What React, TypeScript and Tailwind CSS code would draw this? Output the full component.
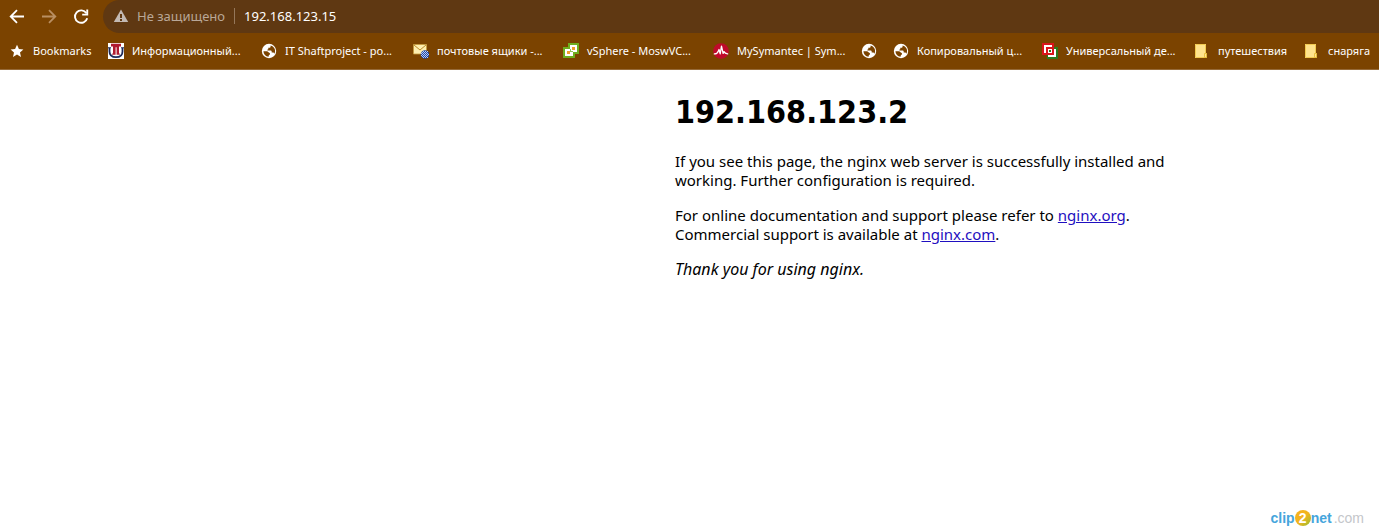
import type { ReactNode } from 'react';

function Svg({ children }: { children: ReactNode }) {
  return (
    <svg width="16" height="16" viewBox="0 0 16 16" className="shrink-0" aria-hidden="true">
      {children}
    </svg>
  );
}

const StarIcon = () => (
  <Svg>
    <path fill="#fff" d="M8 1.800l1.900 4.100 4.500.5-3.400 3 1 4.500L8 11.600l-4 2.300 1-4.500-3.400-3 4.500-.5z" />
  </Svg>
);

const UniversityIcon = () => (
  <Svg>
    <path fill="#fff" d="M0 0h16v16H0z" />
    <path fill="none" stroke="#1d2a5c" strokeWidth="1.800" d="M1.500 5v3.500C1.500 12 4 14.200 8 14.200s6.500-2.200 6.500-5.700V5" />
    <path fill="#1d2a5c" d="M0 4.200h3v1H0zM13 4.200h3v1h-3z" />
    <path fill="#b01a30" d="M3 .8h10v2.800h-2v7h.8v1.200H8.600V4.200H7.600v7.600H4.200v-1.200H5v-7H3z" />
  </Svg>
);

const GlobeIcon = () => (
  <Svg>
    <circle cx="8" cy="8" r="7.200" fill="#fff" />
    <path
      fill="#7b4300"
      d="M2.400 8.200h3.200c.9 0 1.500.4 1.900 1.100.3.500.8.600 1.400.6v1.700c-.7.100-1.100.5-1.200 1.200l-.1.900C4.600 13.400 2.500 11.200 2.400 8.200zM9.600 2.500v.9c0 .8-.6 1.300-1.400 1.300h-.9v1.200c0 .5-.4.700-.9.700v.9h3c.8 0 1.300.5 1.300 1.200v.8h1c.9 0 1.500.5 1.700 1.300.9-1.400.9-3.700.1-5.200-.8-1.600-2.200-2.700-3.900-3.100z"
    />
  </Svg>
);

const MailIcon = () => (
  <Svg>
    <path fill="#fdeeb0" stroke="#c59a3c" strokeWidth=".8" d="M.5 1.500h13v9.500H.5z" />
    <path fill="none" stroke="#b98b2c" d="M1 2l6 5 6-5" />
    <circle cx="12" cy="11.500" r="4.300" fill="#2147a4" />
    <path
      stroke="#b9cdf5"
      strokeWidth="1"
      strokeDasharray="1 1"
      d="M10 8.500h5M9 9.500h6M8 10.500h8M9 11.500h7M8 12.500h8M9 13.500h6M10 14.500h5"
    />
  </Svg>
);

const VSphereIcon = () => (
  <Svg>
    <path fill="#6fae1f" d="M5 0h11v11h-4v4H0V4h5z" />
    <path fill="#fff" d="M7 2h7v7h-4v4H2V6h5z" />
    <path fill="#8fc256" d="M7 6h1v2h2v1H7z" />
    <path fill="#f0a02b" d="M9 4h3v3H9zM4 8h3v3H4z" />
  </Svg>
);

const PulseIcon = () => (
  <Svg>
    <circle cx="8" cy="8" r="7.800" fill="#c00a2b" />
    <path
      fill="none"
      stroke="#fff"
      strokeWidth="1.300"
      strokeLinejoin="round"
      d="M.8 10.800c2.400.3 3.700-.4 4.400-2.600L6 6.500l1.200 4.300 1.300-7.600 1.600 7.200.9-1.800c.6 1.500 1.700 2.400 4.200 2.200"
    />
  </Svg>
);

const SquaresIcon = () => (
  <Svg>
    <path fill="#d9151b" d="M0 0h12v12H0z" />
    <path fill="#2c7a1d" d="M12 4h4v12H5v-4h7z" />
    <path fill="#fff" d="M2 2h8v2H4v6H2z" />
    <path fill="#fff" d="M12 6h2v8H6v-2h6z" />
    <path fill="#fff" d="M6 6h4v4H6z" />
    <path fill="#2c7a1d" d="M7 7h2v2H7z" />
  </Svg>
);

const FolderIcon = () => (
  <Svg>
    <path fill="#ffe38c" d="M1 1h11v14H1z" />
    <path fill="none" stroke="#f2cb50" d="M1.500 1.500h10v9h1v4h-11z" />
    <path fill="#ffe38c" stroke="#e5b92f" strokeWidth=".8" d="M10.500 10.500h2v4h-2z" />
  </Svg>
);

type Bookmark = { icon: () => ReactNode; label?: string; width: string };

const bookmarks: Bookmark[] = [
  { icon: StarIcon, label: 'Bookmarks', width: 'w-[83px]' },
  { icon: UniversityIcon, label: 'Информационный...', width: 'w-[137px]' },
  { icon: GlobeIcon, label: 'IT Shaftproject - po...', width: 'w-[136px]' },
  { icon: MailIcon, label: 'почтовые ящики -...', width: 'w-[134px]' },
  { icon: VSphereIcon, label: 'vSphere - MoswVC...', width: 'w-[134px]' },
  { icon: PulseIcon, label: 'MySymantec | Sym...', width: 'w-[132px]' },
  { icon: GlobeIcon, width: 'w-4' },
  { icon: GlobeIcon, label: 'Копировальный ц...', width: 'w-[133px]' },
  { icon: SquaresIcon, label: 'Универсальный де...', width: 'w-[136px]' },
  { icon: FolderIcon, label: 'путешествия', width: 'w-[94px]' },
  { icon: FolderIcon, label: 'снаряга', width: 'w-[67px]' },
];

function BrowserBar() {
  return (
    <header className="overflow-hidden border-b border-[#966a38] bg-[#7b4300] font-['Noto_Sans',sans-serif] text-white">
      <div className="flex h-[33px] items-center">
        <div className="flex w-[103px] shrink-0 items-center gap-4 pl-[9px]">
          <button type="button" aria-label="Back">
            <svg width="16" height="16" viewBox="0 0 16 16" fill="none" stroke="#fff" strokeWidth="1.800">
              <path d="M15 7.500H2M8 1.200L1.700 7.500 8 13.800" />
            </svg>
          </button>
          <button type="button" aria-label="Forward">
            <svg width="16" height="16" viewBox="0 0 16 16" fill="none" stroke="#b98f62" strokeWidth="1.800">
              <path d="M1 7.500h13M8 1.200l6.300 6.300L8 13.800" />
            </svg>
          </button>
          <button type="button" aria-label="Reload">
            <svg width="16" height="16" viewBox="0 0 16 16">
              <path fill="none" stroke="#fff" strokeWidth="1.900" d="M13.400 4.200A6.200 6.200 0 1 0 14.200 9.200" />
              <path fill="#fff" d="M15.200.5v6H9.200V4.700h4.100V.5z" />
            </svg>
          </button>
        </div>
        <div className="flex h-[33px] flex-1 items-center rounded-l-full bg-[#5f3812] pb-px pl-[10px] text-[13px]">
          <svg width="16" height="16" viewBox="0 0 16 16" aria-hidden="true">
            <path fill="#c3b9b3" d="M8 1.500L15.200 14H.8z" />
            <path fill="#5f3812" d="M7 6h2v4H7zM7 11h2v2H7z" />
          </svg>
          <label htmlFor="address" className="ml-2 border-r border-[#95775a] pr-[9px] leading-4 text-[#b9a797]">
            Не защищено
          </label>
          <input
            id="address"
            type="text"
            defaultValue="192.168.123.15"
            className="ml-[9px] h-4 min-w-0 flex-1 bg-transparent leading-4 text-white outline-none"
          />
        </div>
      </div>
      <nav className="flex h-9 items-center gap-4 pl-[9px] text-[11px]">
        {bookmarks.map(({ icon: Icon, label, width }, i) => (
          <a
            key={i}
            href="#"
            aria-label={label ?? 'Bookmark'}
            className={`flex shrink-0 items-center gap-2 whitespace-nowrap ${width}`}
          >
            <Icon />
            {label && <span>{label}</span>}
          </a>
        ))}
      </nav>
    </header>
  );
}

function Watermark() {
  return (
    <div className="flex items-center font-['Liberation_Sans',sans-serif] text-[14px] leading-5">
      <span className="font-bold text-[#45a5dc]">clip</span>
      <span className="flex size-4 items-center justify-center rounded-full bg-linear-to-br from-[#f6b21f] via-[#f2b41f] to-[#8dbb2f] font-bold text-white">
        2
      </span>
      <span className="font-bold text-[#45a5dc]">net</span>
      <span className="ml-0.5 text-[#c4c6ca]">.com</span>
    </div>
  );
}

export default function App() {
  return (
    <div className="flex min-h-screen flex-col bg-white">
      <BrowserBar />
      <main className="ml-[675px] max-w-[560px] pt-[23px] font-['Noto_Sans',sans-serif] text-[15px] leading-[19px] text-black">
        <h1 className="font-['DejaVu_Sans_Condensed','DejaVu_Sans',sans-serif] text-[32px] leading-[39px] font-bold">
          192.168.123.2
        </h1>
        <p className="mt-5">
          If you see this page, the nginx web server is successfully installed and
          <br />
          working. Further configuration is required.
        </p>
        <p className="mt-4">
          For online documentation and support please refer to{' '}
          <a href="http://nginx.org/" className="text-[#1f0fc0] underline">nginx.org</a>.<br />
          Commercial support is available at{' '}
          <a href="http://nginx.com/" className="text-[#1f0fc0] underline">nginx.com</a>.
        </p>
        <p className="mt-4 text-[16px] leading-[19px]">
          <em>Thank you for using nginx.</em>
        </p>
      </main>
      <footer className="mt-auto flex justify-end pr-[15px]">
        <Watermark />
      </footer>
    </div>
  );
}
